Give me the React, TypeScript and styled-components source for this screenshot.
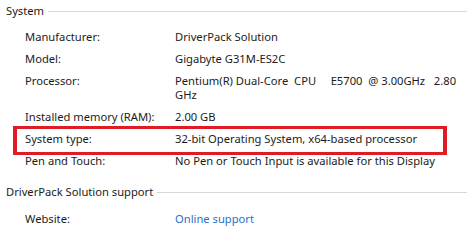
import React from "react";
import styled, { createGlobalStyle } from "styled-components";

const Global = createGlobalStyle`
  html, body { margin: 0; padding: 0; background: #ffffff; }
  body { font-family: "Noto Sans", "Open Sans", sans-serif; font-size: 11.2px; color: #1b1b1b; }
`;

const Page = styled.div`
  width: 467px;
  height: 230px;
  overflow: hidden;
  display: flex;
  flex-direction: column;
`;

const Section = styled.section<{ $top: number }>`
  display: flex;
  flex-direction: column;
  padding-top: ${(p) => p.$top}px;
`;

const Header = styled.div`
  display: flex;
  align-items: center;
  padding-left: 6px;
  line-height: 16px;
`;

const Title = styled.span`
  white-space: nowrap;
  color: #1b1b1b;
`;

const Rule = styled.div`
  flex: 1;
  height: 1px;
  margin-left: 4px;
  margin-top: 1px;
  background: #d6d6d6;
`;

const Rows = styled.div<{ $top: number }>`
  display: flex;
  flex-direction: column;
  padding-top: ${(p) => p.$top}px;
`;

const Row = styled.div<{ $highlight?: boolean }>`
  position: relative;
  display: grid;
  grid-template-columns: 150px 1fr;
  padding: 4px 0 4px 25px;
  line-height: 14px;

  ${(p) =>
    p.$highlight &&
    `
    &::after {
      content: "";
      position: absolute;
      left: 13px;
      top: -2px;
      width: 426px;
      height: 23px;
      border-style: solid;
      border-color: #e11b24;
      border-width: 3px 4px;
      pointer-events: none;
    }
  `}
`;

const Label = styled.span`
  white-space: nowrap;
`;

const Value = styled.span`
  white-space: pre-wrap;
`;

const Link = styled.a`
  color: #2d6fc6;
  text-decoration: none;
  cursor: pointer;
`;

export default function App() {
  return (
    <>
      <Global />
      <Page>
        <Section $top={3}>
          <Header>
            <Title>System</Title>
            <Rule />
          </Header>
          <Rows $top={7}>
            <Row>
              <Label>Manufacturer:</Label>
              <Value>DriverPack Solution</Value>
            </Row>
            <Row>
              <Label>Model:</Label>
              <Value>Gigabyte G31M-ES2C</Value>
            </Row>
            <Row>
              <Label>Processor:</Label>
              <Value>{"Pentium(R) Dual-Core  CPU     E5700  @ 3.00GHz   2.80 GHz"}</Value>
            </Row>
            <Row>
              <Label>Installed memory (RAM):</Label>
              <Value>2.00 GB</Value>
            </Row>
            <Row $highlight>
              <Label>System type:</Label>
              <Value>32-bit Operating System, x64-based processor</Value>
            </Row>
            <Row>
              <Label>Pen and Touch:</Label>
              <Value>No Pen or Touch Input is available for this Display</Value>
            </Row>
          </Rows>
        </Section>
        <Section $top={12}>
          <Header>
            <Title>DriverPack Solution support</Title>
            <Rule />
          </Header>
          <Rows $top={8}>
            <Row>
              <Label>Website:</Label>
              <Value>
                <Link>Online support</Link>
              </Value>
            </Row>
          </Rows>
        </Section>
      </Page>
    </>
  );
}
